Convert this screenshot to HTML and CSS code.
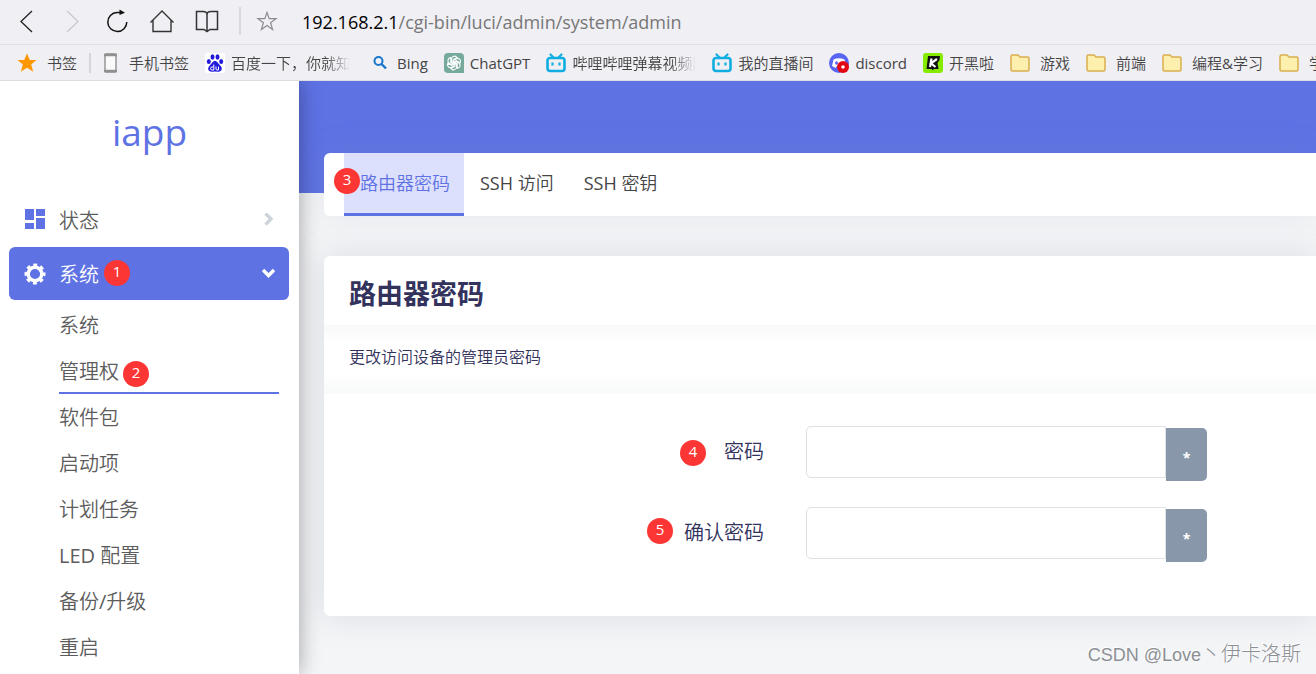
FILE: index.html
```html
<!DOCTYPE html>
<html lang="zh-CN">
<head>
<meta charset="utf-8">
<title>iapp - 路由器密码</title>
<link rel="stylesheet" href="styles.css">
</head>
<body>
<svg width="0" height="0" class="defs" aria-hidden="true">
  <symbol id="folder" viewBox="0 0 20 18"><path d="M1 2.500Q1 1 2.500 1H8l2 2h7.500Q19 3 19 4.500V15.500Q19 17 17.500 17h-15Q1 17 1 15.500Z" fill="#fdf0ae" stroke="#d9ad4d" stroke-width="1.500"/></symbol>
  <symbol id="bili" viewBox="0 0 20 20"><rect x="1.500" y="5" width="17" height="13" rx="2.500" fill="none" stroke="#10aee0" stroke-width="2.600"/><path d="M4.500 1.500 7.500 4.500M15.500 1.500 12.500 4.500" stroke="#10aee0" stroke-width="2.200" stroke-linecap="round"/><path d="M6.500 9.500v3M13.500 9.500v3" stroke="#10aee0" stroke-width="2.200"/></symbol>
</svg>
<header class="browser">
  <div class="toolbar">
    <button class="tool" aria-label="后退"><svg width="26" height="26" viewBox="0 0 26 26"><path d="M18 3 7 13.500 18 24" stroke="#222" stroke-width="1.300"/></svg></button>
    <button class="tool" aria-label="前进"><svg width="26" height="26" viewBox="0 0 26 26"><path d="M8 3 19 13.500 8 24" stroke="#c8c8ce" stroke-width="1.300"/></svg></button>
    <button class="tool" aria-label="刷新"><svg width="26" height="26" viewBox="0 0 26 26"><path d="M16.500 4.500H13A9.500 9.500 0 1 0 22.800 14" stroke="#111" stroke-width="1.500"/><path d="M15.500 1.500 21 4.700 15.500 7Z" fill="#111"/></svg></button>
    <button class="tool" aria-label="主页"><svg width="26" height="26" viewBox="0 0 26 26"><path d="M1.500 14.500 13 3 24.500 14.500M4 12.500V23.500H22V12.500" stroke="#333" stroke-width="1.400"/></svg></button>
    <button class="tool" aria-label="阅读"><svg width="26" height="26" viewBox="0 0 26 26"><path d="M2.500 3.500H9Q13 3.500 13 6.500Q13 3.500 17 3.500H23.500V21.500H16L13 23.500 10 21.500H2.500ZM13 6.500V23" stroke="#333" stroke-width="1.500"/></svg></button>
    <span class="tool-line"></span>
    <button class="tool star" aria-label="收藏"><svg width="22" height="22" viewBox="0 0 22 22"><path d="M11 2.500 13.200 8.700H20L14.600 12.700 16.600 19.500 11 15.500 5.400 19.500 7.400 12.700 2 8.700H8.800Z" stroke="#8c8c90" stroke-width="1.200"/></svg></button>
    <div class="url"><b>192.168.2.1</b>/cgi-bin/luci/admin/system/admin</div>
  </div>
  <nav class="bookmarks">
    <a class="mark wide" href="#"><svg width="20" height="20" viewBox="0 0 20 20"><path d="M10 .5 12.800 7H19.500L14.200 11.500 16.200 18.800 10 14.800 3.800 18.800 5.800 11.500 .5 7H7.200Z" fill="#ff9800"/></svg>书签</a>
    <span class="mark-line"></span>
    <a class="mark phone" href="#"><svg width="13" height="20" viewBox="0 0 13 20"><rect x="1" y="1" width="11" height="18" rx="1" fill="#fafafa" stroke="#909090" stroke-width="1.400"/><path d="M0 2h13M0 18h13" stroke="#909090" stroke-width="2.400"/></svg>手机书签</a>
    <a class="mark" href="#"><svg width="20" height="20" viewBox="0 0 20 20"><rect width="20" height="20" rx="2" fill="#fff"/><g fill="#2319dc"><ellipse cx="3.800" cy="8.500" rx="2" ry="2.600"/><ellipse cx="7.500" cy="4" rx="2" ry="2.700"/><ellipse cx="12.500" cy="4" rx="2" ry="2.700"/><ellipse cx="16.200" cy="8.500" rx="2" ry="2.600"/><path d="M10 8C7.500 8 7 10.500 5 12.300C1.500 15.500 3.500 19 7 18.700Q10 18.200 13 18.700C16.500 19 18.500 15.500 15 12.300C13 10.500 12.500 8 10 8Z"/></g><path d="M8.800 11.500V17H7a1.500 1.500 0 0 1 0-3h1.500M11 13.500V16q0 1 1 1h1.500V13.500" stroke="#fff" fill="none"/></svg><span class="cut baidu">百度一下，你就知道</span></a>
    <a class="mark" href="#"><svg width="25" height="20" viewBox="0 0 25 20"><circle cx="12.500" cy="8" r="4" fill="none" stroke="#1877cc" stroke-width="2"/><path d="M15.500 11 20 15.500" stroke="#1877cc" stroke-width="2.400"/></svg>Bing</a>
    <a class="mark" href="#"><svg width="20" height="20" viewBox="0 0 20 20"><path d="M4 0H16Q20 0 20 4V20H4Q0 20 0 16V4Q0 0 4 0Z" fill="#74a99b"/><g fill="none" stroke="#fff" stroke-width="1.100"><path id="p" d="M7.500 9V5.800a3 3 0 0 1 5.500-1.300L9 6.900v5"/><use href="#p" transform="rotate(60 10 10)"/><use href="#p" transform="rotate(120 10 10)"/><use href="#p" transform="rotate(180 10 10)"/><use href="#p" transform="rotate(240 10 10)"/><use href="#p" transform="rotate(300 10 10)"/></g></svg>ChatGPT</a>
    <a class="mark" href="#"><svg width="20" height="20"><use href="#bili"/></svg><span class="cut bili">哔哩哔哩弹幕视频网</span></a>
    <a class="mark" href="#"><svg width="20" height="20"><use href="#bili"/></svg>我的直播间</a>
    <a class="mark" href="#"><svg width="20" height="20" viewBox="0 0 20 20"><circle cx="10" cy="10" r="10" fill="#5865f2"/><path d="M4.500 6.500Q10 4 15.500 6.500L17 13 13.500 15 12 13H8L6.500 15 3 13Z" fill="#fff"/><ellipse cx="7.500" cy="10" rx="1.500" ry="1.700" fill="#5865f2"/><circle cx="14" cy="14" r="6" fill="#e30613"/><circle cx="14" cy="14" r="1.800" fill="#fff"/></svg>discord</a>
    <a class="mark" href="#"><svg width="20" height="20" viewBox="0 0 20 20"><rect width="20" height="20" rx="3" fill="#87eb00"/><path d="M5 3H17L16.500 7 14.500 10 15.500 16H11L9 17.500V16H3.500Z" fill="#111"/><path d="M8.500 5.500 7 14M14 6 8 10.300 12.500 14" stroke="#fff" stroke-width="2.200" fill="none"/></svg>开黑啦</a>
    <a class="mark wide" href="#"><svg width="20" height="18"><use href="#folder"/></svg>游戏</a>
    <a class="mark wide" href="#"><svg width="20" height="18"><use href="#folder"/></svg>前端</a>
    <a class="mark wide" href="#"><svg width="20" height="18"><use href="#folder"/></svg>编程&amp;学习</a>
    <a class="mark wide" href="#"><svg width="20" height="18"><use href="#folder"/></svg>学</a>
  </nav>
</header>
<div class="page">
  <aside class="sidebar">
    <a class="brand" href="#">iapp</a>
    <nav class="menu">
      <a class="menu-item" href="#"><svg width="22" height="22" viewBox="0 0 22 22"><path d="M1 0H10V11H1ZM12 0H21V7H12ZM1 14H10V20H1ZM12 9H21V20H12Z" fill="#5e72e4"/></svg><span>状态</span><svg class="chevron" width="14" height="14" viewBox="0 0 14 14"><path d="M4.500 .5 10 6 4.500 11.500" fill="none" stroke="#ced4da" stroke-width="3.400"/></svg></a>
      <a class="menu-item active" href="#"><svg width="22" height="22" viewBox="0 0 22 22"><circle cx="11" cy="11" r="6.800" fill="none" stroke="#fff" stroke-width="3.400"/><circle cx="11" cy="11" r="9" fill="none" stroke="#fff" stroke-width="3" stroke-dasharray="3.800 3.268" stroke-dashoffset="1.900"/></svg><span>系统</span><i class="badge b1">1</i><svg class="chevron" width="14" height="14" viewBox="0 0 14 14"><path d="M2 3 7.500 8.500 13 3" fill="none" stroke="#fff" stroke-width="3.400"/></svg></a>
      <div class="submenu">
        <a href="#">系统</a>
        <a class="current" href="#">管理权<i class="badge b2">2</i></a>
        <a href="#">软件包</a>
        <a href="#">启动项</a>
        <a href="#">计划任务</a>
        <a href="#">LED 配置</a>
        <a href="#">备份/升级</a>
        <a href="#">重启</a>
      </div>
    </nav>
  </aside>
  <main class="main">
    <div class="banner"></div>
    <nav class="tabs">
      <a class="tab selected" href="#">路由器密码<i class="badge b3">3</i></a>
      <a class="tab" href="#">SSH 访问</a>
      <a class="tab" href="#">SSH 密钥</a>
    </nav>
    <section class="card">
      <h1 class="title">路由器密码</h1>
      <p class="desc">更改访问设备的管理员密码</p>
      <form class="form">
        <div class="row"><label for="pw1">密码<i class="badge b4">4</i></label><input id="pw1" type="password"><button type="button">*</button></div>
        <div class="row"><label for="pw2">确认密码<i class="badge b5">5</i></label><input id="pw2" type="password"><button type="button">*</button></div>
      </form>
    </section>
    <div class="watermark"><span>CSDN @Love</span>丶伊卡洛斯</div>
  </main>
</div>
</body>
</html>
```

FILE: styles.css
```css
* { box-sizing: border-box; }
body {
  margin: 0;
  height: 100vh;
  display: flex;
  flex-direction: column;
  overflow: hidden;
  font-family: "Open Sans", "Noto Sans CJK SC DemiLight", "Noto Sans CJK SC", sans-serif;
  background: #f4f5f7;
}
a { color: inherit; text-decoration: none; }
.defs { position: absolute; }

/* browser bars */
.browser { background: #f0eff4; color: #444; flex: none; }
.toolbar {
  display: flex;
  align-items: center;
  height: 45px;
  padding: 0 14px 3px;
  border-bottom: 1px solid #e1e1e5;
}
.tool {
  flex: none;
  display: flex;
  padding: 0;
  margin-right: 19px;
  border: 0;
  background: none;
}
.tool svg { fill: none; }
.tool-line { width: 2px; height: 28px; margin-right: 15px; background: #d9d9de; }
.star { margin-right: 24px; }
.url { padding-top: 2px; font-size: 18px; color: #777; white-space: nowrap; }
.url b { font-weight: 400; color: #000; }
.bookmarks {
  display: flex;
  align-items: center;
  gap: 16px;
  height: 36px;
  padding-left: 17px;
  border-bottom: 1px solid #dcdce2;
  overflow: hidden;
}
.mark {
  flex: none;
  display: flex;
  align-items: center;
  gap: 6px;
  font-size: 15px;
  line-height: 20px;
  white-space: nowrap;
}
.wide { gap: 10px; }
.phone { gap: 12px; }
.mark-line { flex: none; width: 2px; height: 20px; margin: 0 -3px 0 -4px; background: #d5d5da; }
.cut { overflow: hidden; -webkit-mask-image: linear-gradient(90deg, #000 80%, transparent); mask-image: linear-gradient(90deg, #000 80%, transparent); }
.baidu { width: 119px; }
.bili { width: 124px; }

/* layout */
.page { flex: 1; display: flex; min-height: 0; }
.sidebar {
  position: relative;
  z-index: 1;
  flex: none;
  width: 299px;
  background: #fff;
  box-shadow: 0 0 20px rgba(0, 0, 0, .35);
  clip-path: inset(0 -30px 0 0);
}
.brand {
  display: block;
  padding: 25px 0 35px;
  font-size: 37px;
  line-height: 52px;
  text-align: center;
  color: #5e72e4;
}
.menu { padding: 0 10px 0 9px; font-size: 20px; color: #5c5c5c; }
.menu-item {
  display: flex;
  align-items: center;
  gap: 13px;
  height: 53px;
  margin-bottom: 1px;
  padding: 0 14px 0 15px;
  border-radius: 6px;
}
.chevron { margin-left: auto; }
.active { position: relative; background: #5e72e4; color: #fff; margin-bottom: 2px; }
.submenu { padding: 0 10px 0 50px; }
.submenu a { position: relative; display: block; height: 46px; line-height: 48px; }
.submenu .current { border-bottom: 2px solid #5e72e4; }

.badge {
  position: absolute;
  width: 26px;
  height: 26px;
  border-radius: 50%;
  background: #fc3635;
  color: #fff;
  font-size: 15px;
  font-style: normal;
  line-height: 23px;
  text-align: center;
}
.b1 { left: 95px; top: 13px; }
.b2 { left: 64px; top: 13px; }
.b3 { left: -10px; top: 15px; }
.b4 { right: 58px; top: 14px; }
.b5 { right: 91px; top: 11px; }

.main { position: relative; flex: 1; min-width: 0; padding-left: 25px; }
.banner { height: 112px; margin: 0 0 -40px -25px; background: #5e72e4; }
.tabs {
  position: relative;
  display: flex;
  padding-left: 20px;
  background: #fff;
  border-radius: 6px 0 0 6px;
  box-shadow: 0 0 32px rgba(136, 152, 170, .15);
  font-size: 18px;
  color: #444;
}
.tab { position: relative; height: 63px; padding: 0 14px 0 16px; line-height: 61px; }
.selected { background: #dde0fd; color: #5e72e4; border-bottom: 3px solid #5e72e4; }
.card {
  position: relative;
  margin-top: 40px;
  background: #fff;
  border-radius: 6px 0 0 6px;
  box-shadow: 0 0 32px rgba(136, 152, 170, .25);
  color: #32325d;
}
.title { margin: 0; padding: 4px 25px 0; font-family: "Noto Sans CJK SC", sans-serif; font-size: 27px; font-weight: 700; line-height: 65px; }
.desc {
  margin: 0;
  padding: 0 25px 4px;
  font-size: 16px;
  line-height: 65px;
  background: linear-gradient(#f8f9fa, #fff 25%, #fff 70%, #f8f9fa);
}
.form { display: flex; flex-direction: column; gap: 28px; padding: 32px 0 54px; }
.row { display: flex; align-items: flex-start; height: 53px; }
.row:last-child { margin-bottom: 2px; }
.row label { position: relative; width: 440px; margin-right: 42px; font-size: 20px; line-height: 51px; text-align: right; }
.row input {
  width: 360px;
  height: 52px;
  padding: 0 12px;
  border: 1px solid #dee2e6;
  border-radius: 5px 0 0 5px;
  background: #fff;
  font-size: 20px;
}
.row button {
  width: 41px;
  height: 53px;
  margin-top: 2px;
  padding: 6px 0 0;
  border: 0;
  border-radius: 0 5px 5px 0;
  background: #8898aa;
  color: #fff;
  font: 700 14px "Open Sans", sans-serif;
}
.watermark {
  position: absolute;
  right: 15px;
  bottom: 4px;
  font: 300 20px "Liberation Sans", "Noto Sans CJK SC", sans-serif;
  line-height: 29px;
  color: #8c8f94;
  text-shadow: -1px -1px 0 #fff;
}
.watermark span { font-size: 18px; }
```
